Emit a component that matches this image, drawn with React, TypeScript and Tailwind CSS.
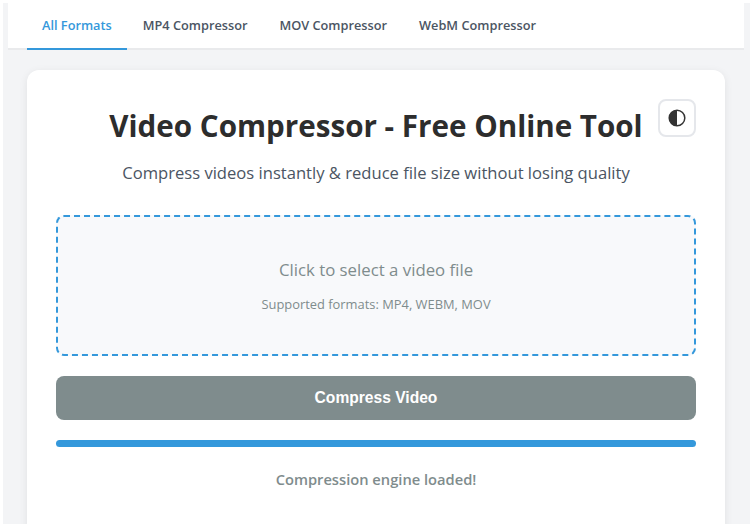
export default function App() {
  const tabs = ["All Formats", "MP4 Compressor", "MOV Compressor", "WebM Compressor"];
  return (
    <div className="h-[524px] overflow-hidden bg-white pl-[3px] pt-[3px] font-['Open_Sans','Noto_Sans',sans-serif]">
      <div className="h-[521px] bg-[#f3f4f6] pl-[5px] pr-[6px]">
        <nav className="flex h-[47px] border-b-2 border-[#e9eaec] bg-white pl-[19px]">
          {tabs.map((t, i) => (
            <a
              key={t}
              className={
                i === 0
                  ? "h-[47px] border-b-2 border-[#3498db] px-[15px] pt-[12px] text-[12.75px] font-semibold leading-[20px] text-[#3498db]"
                  : "h-[45px] px-[16px] pt-[12px] text-[12.75px] font-semibold leading-[20px] text-[#4b5563]"
              }
            >
              {t}
            </a>
          ))}
        </nav>
        <main className="mx-[19px] mt-5 h-[460px] rounded-t-xl bg-white px-[29px] pt-[30px] shadow-[0_2px_8px_rgba(0,0,0,0.08)]">
          <header className="relative">
            <h1 className="pt-[1px] text-center text-[29.6px] font-bold leading-[50px] text-[#2d2d2d]">
              Video Compressor - Free Online Tool
            </h1>
            <button className="absolute right-0 top-[-1px] flex h-[38px] w-[38px] items-center justify-center rounded-lg border-2 border-[#e5e7eb] bg-white pr-[1px]">
              <svg width="18" height="18" viewBox="0 0 18 18">
                <circle cx="9" cy="9" r="7.8" fill="none" stroke="#333" strokeWidth="1.5" />
                <path d="M9 1.2a7.8 7.8 0 0 0 0 15.6z" fill="#333" />
              </svg>
            </button>
          </header>
          <p className="mt-[8px] text-center text-[16.6px] leading-[28px] text-[#4b5563]">
            Compress videos instantly &amp; reduce file size without losing quality
          </p>
          <section className="mt-[28px] flex h-[141px] flex-col items-center rounded-lg border-2 border-dashed border-[#3498db] bg-[#f8f9fb] pt-[39px]">
            <p className="text-[16.8px] leading-[28px] text-[#7f8c8d]">Click to select a video file</p>
            <p className="mt-[10px] text-[12.9px] leading-[20px] text-[#7f8c8d]">Supported formats: MP4, WEBM, MOV</p>
          </section>
          <button className="mt-5 block h-[44px] w-full rounded-lg bg-[#7f8c8d] font-['Liberation_Sans',sans-serif] text-[15.6px] font-bold text-white">
            Compress Video
          </button>
          <div className="mt-5 h-[7px] rounded bg-[#3498db]" />
          <p className="mt-[21px] text-center text-[14.7px] font-semibold leading-[22px] text-[#7f8c8d]">
            Compression engine loaded!
          </p>
        </main>
      </div>
    </div>
  );
}
